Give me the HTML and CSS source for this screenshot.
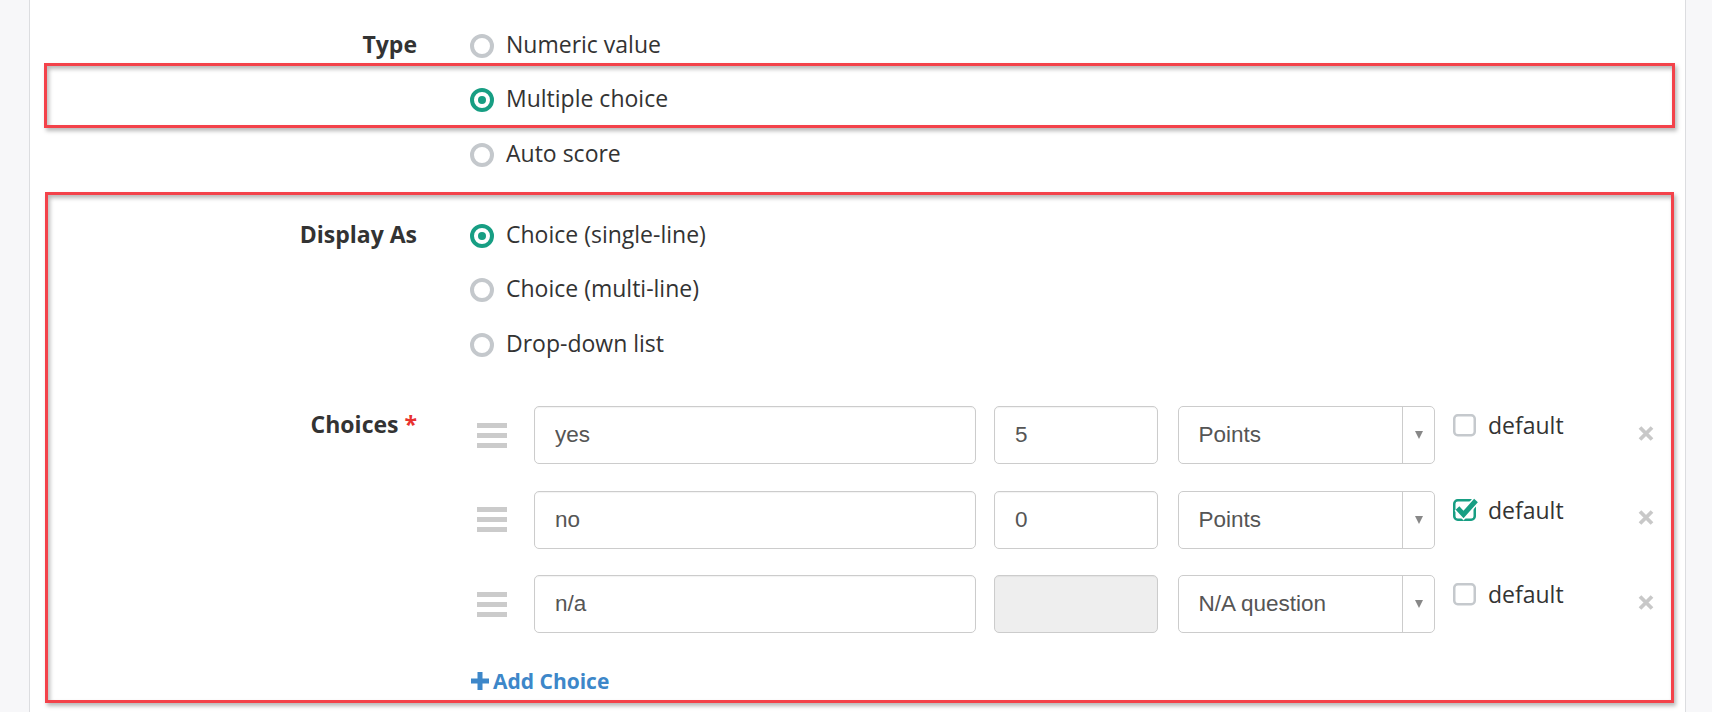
FILE: index.html
```html
<!DOCTYPE html>
<html>

<head>
    <title>Question Settings</title>
    <link rel="stylesheet" href="styles.css">
</head>

<body>
    <div class="page">
        <div class="form-row">
            <div class="form-label">Type</div>
            <div class="form-controls">
                <div class="radio-option"><span class="radio"></span>Numeric value</div>
                <div class="radio-option"><span class="radio checked"></span>Multiple choice</div>
                <div class="radio-option"><span class="radio"></span>Auto score</div>
            </div>
        </div>

        <div class="form-row">
            <div class="form-label">Display As</div>
            <div class="form-controls">
                <div class="radio-option"><span class="radio checked"></span>Choice (single-line)</div>
                <div class="radio-option"><span class="radio"></span>Choice (multi-line)</div>
                <div class="radio-option"><span class="radio"></span>Drop-down list</div>
            </div>
        </div>

        <div class="form-row choices-row">
            <div class="form-label label-top">Choices <span class="required">*</span></div>
            <div class="form-controls">
                <div class="choice">
                    <div class="drag-handle"><span></span><span></span><span></span></div>
                    <input class="field field-text" type="text" value="yes">
                    <input class="field field-score" type="text" value="5">
                    <div class="select"><span class="select-value">Points</span><span class="select-arrow"></span></div>
                    <label class="default-check">
                        <svg width="27" height="23" viewBox="0 0 27 23">
                            <rect x="1.25" y="1.25" width="20.5" height="20" rx="3.5" fill="none" stroke="#c5c9cd" stroke-width="2.5" />
                        </svg>
                        default
                    </label>
                    <span class="remove">
                        <svg width="16" height="15" viewBox="0 0 16 15">
                            <path d="M2 1.5L14 13.5M14 1.5L2 13.5" stroke="#c8c8c8" stroke-width="3.8" />
                        </svg>
                    </span>
                </div>
                <div class="choice">
                    <div class="drag-handle"><span></span><span></span><span></span></div>
                    <input class="field field-text" type="text" value="no">
                    <input class="field field-score" type="text" value="0">
                    <div class="select"><span class="select-value">Points</span><span class="select-arrow"></span></div>
                    <label class="default-check">
                        <svg width="27" height="23" viewBox="0 0 27 23">
                            <rect x="1.25" y="2.25" width="20.5" height="19.5" rx="3.5" fill="none" stroke="#179e83" stroke-width="2.5" />
                            <path d="M4.5 10L10.5 16.5L23 2.5" fill="none" stroke="#fff" stroke-width="8" />
                            <path d="M4.5 10L10.5 16.5L23 2.5" fill="none" stroke="#179e83" stroke-width="5" />
                        </svg>
                        default
                    </label>
                    <span class="remove">
                        <svg width="16" height="15" viewBox="0 0 16 15">
                            <path d="M2 1.5L14 13.5M14 1.5L2 13.5" stroke="#c8c8c8" stroke-width="3.8" />
                        </svg>
                    </span>
                </div>
                <div class="choice">
                    <div class="drag-handle"><span></span><span></span><span></span></div>
                    <input class="field field-text" type="text" value="n/a">
                    <input class="field field-score" type="text" value="" disabled>
                    <div class="select"><span class="select-value">N/A question</span><span class="select-arrow"></span></div>
                    <label class="default-check">
                        <svg width="27" height="23" viewBox="0 0 27 23">
                            <rect x="1.25" y="1.25" width="20.5" height="20" rx="3.5" fill="none" stroke="#c5c9cd" stroke-width="2.5" />
                        </svg>
                        default
                    </label>
                    <span class="remove">
                        <svg width="16" height="15" viewBox="0 0 16 15">
                            <path d="M2 1.5L14 13.5M14 1.5L2 13.5" stroke="#c8c8c8" stroke-width="3.8" />
                        </svg>
                    </span>
                </div>

                <a class="add-choice" href="#">
                    <svg width="18" height="18" viewBox="0 0 18 18">
                        <path d="M6.5 0h5v6.5H18v5h-6.5V18h-5v-6.5H0v-5h6.5z" fill="currentColor" />
                    </svg>
                    Add Choice
                </a>
            </div>
        </div>

        <!-- annotation frames drawn over the form -->
        <div class="annotation annotation-type"></div>
        <div class="annotation annotation-choices"></div>
    </div>
</body>

</html>
```

FILE: styles.css
```css
:root {
    --teal: #179e83;
    --red: #f3424a;
    --link: #3d87c9;
    --border: #cccccc;
    --muted: #c4c8cc;
    --text: #333333;
    --input-text: #555555;
    --page-bg: #f7f7f9;
}

* {
    margin: 0;
    padding: 0;
    box-sizing: border-box;
}

html,
body {
    height: 100%;
}

body {
    background: var(--page-bg);
    font-family: "Open Sans", "Noto Sans", sans-serif;
    font-size: 23px;
    color: var(--text);
    overflow: hidden;
}

.page {
    position: relative;
    width: 1657px;
    height: 100%;
    margin-left: 29px;
    padding-top: 16.5px;
    background: #fff;
    border-left: 1px solid #dcdde0;
    border-right: 1px solid #dcdde0;
}

.form-row {
    display: grid;
    grid-template-columns: 387px 1fr;
    column-gap: 53px;
}

.form-row + .form-row {
    margin-top: 26.5px;
}

.form-row.choices-row {
    margin-top: 36px;
}

.form-label {
    text-align: right;
    font-weight: 700;
    line-height: 54.5px;
}

.form-label.label-top {
    line-height: 32px;
    padding-top: 2px;
}

.required {
    color: #e8322f;
}

/* Radio list */
.radio-option {
    display: flex;
    align-items: center;
    height: 54.5px;
}

.radio {
    display: flex;
    align-items: center;
    justify-content: center;
    width: 24px;
    height: 24px;
    margin-top: 4px;
    margin-right: 12px;
    border: 4px solid var(--muted);
    border-radius: 50%;
}

.radio.checked {
    border-color: var(--teal);
}

.radio.checked::after {
    content: "";
    width: 8px;
    height: 8px;
    border-radius: 50%;
    background: var(--teal);
}

/* Choice rows */
.choice {
    display: flex;
    align-items: flex-start;
    height: 58px;
}

.choice + .choice {
    margin-top: 26.5px;
}

.drag-handle {
    align-self: center;
    display: flex;
    flex-direction: column;
    gap: 5px;
    width: 30px;
    margin-left: 7px;
}

.drag-handle span {
    height: 5px;
    background: #cbcbcb;
}

.field {
    height: 58px;
    padding: 0 20px;
    border: 1.5px solid var(--border);
    border-radius: 5px;
    font-family: "Liberation Sans", Arial, sans-serif;
    font-size: 22.5px;
    color: var(--input-text);
    background: #fff;
    box-shadow: inset 0 1px 1px rgba(0, 0, 0, 0.05);
}

.field:disabled {
    background: #eeeeee;
}

.field-text {
    width: 442px;
    margin-left: 27px;
}

.field-score {
    width: 164px;
    margin-left: 18px;
}

.select {
    display: flex;
    align-items: stretch;
    width: 257.5px;
    height: 58px;
    margin-left: 19.5px;
    border: 1.5px solid var(--border);
    border-radius: 5px;
    font-family: "Liberation Sans", Arial, sans-serif;
    font-size: 22.5px;
    color: var(--input-text);
}

.select-value {
    flex: 1;
    display: flex;
    align-items: center;
    padding-left: 20px;
}

.select-arrow {
    display: flex;
    align-items: center;
    justify-content: center;
    width: 32px;
    border-left: 1px solid var(--border);
}

.select-arrow::before {
    content: "";
    border-left: 4.5px solid transparent;
    border-right: 4.5px solid transparent;
    border-top: 8px solid #888;
}

.default-check {
    display: flex;
    align-items: center;
    gap: 8px;
    width: 185px;
    height: 32px;
    margin-top: 3px;
    margin-left: 18px;
}

.remove {
    align-self: center;
    display: flex;
    margin-top: -4px;
}

.add-choice {
    display: inline-flex;
    align-items: center;
    gap: 4px;
    margin-top: 33px;
    margin-left: 1px;
    font-size: 21px;
    line-height: 30px;
    font-weight: 700;
    color: var(--link);
    text-decoration: none;
}

/* Screenshot annotation frames */
.annotation {
    position: absolute;
    border: 3px solid var(--red);
    box-shadow: 2px 3px 4px rgba(0, 0, 0, 0.28), inset 2px 3px 4px rgba(0, 0, 0, 0.28);
    pointer-events: none;
}

.annotation-type {
    left: 14px;
    top: 63px;
    width: 1631px;
    height: 65px;
}

.annotation-choices {
    left: 15px;
    top: 192px;
    width: 1629px;
    height: 511px;
}
```
